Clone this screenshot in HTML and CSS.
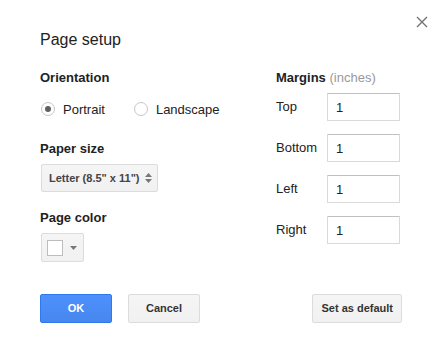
FILE: index.html
```html
<!DOCTYPE html>
<html lang="en">
<head>
    <meta charset="UTF-8">
    <meta name="viewport" content="width=device-width, initial-scale=1.0">
    <title>Page setup</title>
    <link rel="stylesheet" href="styles.css">
</head>
<body>
    <div class="dialog">
        <button class="close-btn" aria-label="Close">
            <svg width="12" height="12" viewBox="0 0 12 12">
                <path d="M1 1 L11 11 M11 1 L1 11" stroke="#737373" stroke-width="1.4" fill="none"/>
            </svg>
        </button>

        <h2 class="dialog-title">Page setup</h2>

        <div class="dialog-body">
            <div class="col-left">
                <div class="section-label">Orientation</div>
                <div class="radio-row">
                    <label class="radio-option">
                        <span class="radio checked"></span>
                        <span>Portrait</span>
                    </label>
                    <label class="radio-option">
                        <span class="radio"></span>
                        <span>Landscape</span>
                    </label>
                </div>

                <div class="section-label spaced">Paper size</div>
                <div class="select-box">
                    <span>Letter (8.5" x 11")</span>
                    <svg width="7" height="10" viewBox="0 0 7 10">
                        <path d="M0 4 L3.5 0 L7 4 Z M0 6 L3.5 10 L7 6 Z" fill="#777"/>
                    </svg>
                </div>

                <div class="section-label spaced">Page color</div>
                <div class="color-btn">
                    <span class="swatch"></span>
                    <svg width="7" height="4" viewBox="0 0 7 4">
                        <path d="M0 0 L7 0 L3.5 4 Z" fill="#777"/>
                    </svg>
                </div>
            </div>

            <div class="col-right">
                <div class="section-label">Margins <span class="hint">(inches)</span></div>
                <div class="margin-list">
                    <div class="margin-row">
                        <span class="margin-name">Top</span>
                        <input class="margin-input" type="text" value="1">
                    </div>
                    <div class="margin-row">
                        <span class="margin-name">Bottom</span>
                        <input class="margin-input" type="text" value="1">
                    </div>
                    <div class="margin-row">
                        <span class="margin-name">Left</span>
                        <input class="margin-input" type="text" value="1">
                    </div>
                    <div class="margin-row">
                        <span class="margin-name">Right</span>
                        <input class="margin-input" type="text" value="1">
                    </div>
                </div>
            </div>
        </div>

        <div class="dialog-footer">
            <button class="btn btn-primary">OK</button>
            <button class="btn">Cancel</button>
            <button class="btn btn-right">Set as default</button>
        </div>
    </div>
</body>
</html>
```

FILE: styles.css
```css
* {
    box-sizing: border-box;
}

body {
    margin: 0;
    background: #fff;
    font-family: 'Liberation Sans', Arial, sans-serif;
    color: #222;
}

.dialog {
    position: relative;
    width: 443px;
    height: 349px;
    padding: 30px 41px 0 40px;
}

.close-btn {
    position: absolute;
    top: 16px;
    right: 15px;
    width: 12px;
    height: 12px;
    padding: 0;
    border: none;
    background: none;
    display: flex;
}

.dialog-title {
    margin: 0;
    font-size: 16px;
    font-weight: normal;
    line-height: 20px;
    color: #222;
}

.dialog-body {
    display: flex;
    margin-top: 20px;
}

.col-left {
    width: 236px;
}

.col-right {
    flex: 1;
}

.section-label {
    font-size: 13px;
    font-weight: bold;
    line-height: 16px;
    color: #222;
}

.section-label.spaced {
    margin-top: 18px;
}

.hint {
    font-weight: normal;
    color: #999;
}

/* orientation */
.radio-row {
    display: flex;
    align-items: center;
    gap: 29px;
    height: 28px;
    margin-top: 9px;
    margin-left: 1px;
}

.radio-option {
    display: flex;
    align-items: center;
    gap: 8px;
    font-size: 13px;
    color: #222;
}

.radio {
    width: 14px;
    height: 14px;
    border: 1px solid #c6c6c6;
    border-radius: 50%;
    background: #fff;
    display: flex;
    align-items: center;
    justify-content: center;
}

.radio.checked::after {
    content: "";
    width: 6px;
    height: 6px;
    border-radius: 50%;
    background: #606060;
}

/* paper size */
.select-box {
    display: flex;
    align-items: center;
    justify-content: space-between;
    width: 117px;
    height: 28px;
    margin-top: 7px;
    margin-left: 1px;
    padding: 0 5px 0 7px;
    border: 1px solid #dcdcdc;
    border-radius: 2px;
    background: linear-gradient(#f5f5f5, #f1f1f1);
    font-size: 11px;
    font-weight: bold;
    color: #444;
}

/* page color */
.color-btn {
    display: flex;
    align-items: center;
    gap: 7px;
    width: 43px;
    height: 29px;
    margin-top: 7px;
    margin-left: 1px;
    padding: 0 6px 0 5px;
    border: 1px solid #dcdcdc;
    border-radius: 2px;
    background: linear-gradient(#f5f5f5, #f1f1f1);
}

.swatch {
    width: 16px;
    height: 16px;
    border: 1px solid #bdbdbd;
    background: #fff;
    margin-top: 1px;
}

/* margins */
.margin-list {
    display: flex;
    flex-direction: column;
    gap: 13px;
    margin-top: 7px;
}

.margin-row {
    display: flex;
    align-items: center;
}

.margin-name {
    width: 51px;
    font-size: 13px;
    line-height: 16px;
    margin-top: -1px;
    color: #222;
}

.margin-input {
    width: 73px;
    height: 28px;
    padding: 0 8px;
    border: 1px solid #d9d9d9;
    border-top-color: #c0c0c0;
    border-radius: 1px;
    font-family: inherit;
    font-size: 13px;
    color: #222;
    outline: none;
}

/* footer */
.dialog-footer {
    display: flex;
    gap: 16px;
    margin-top: 32px;
}

.btn {
    min-width: 72px;
    height: 29px;
    padding: 0 8px;
    border: 1px solid #dcdcdc;
    border-radius: 2px;
    background: linear-gradient(#f5f5f5, #f1f1f1);
    font-family: inherit;
    font-size: 11px;
    font-weight: bold;
    line-height: 27px;
    color: #333;
}

.btn-primary {
    border-color: #3079ed;
    background: linear-gradient(#4d90fe, #4787ed);
    color: #fff;
}

.btn-right {
    margin-left: auto;
}
```
